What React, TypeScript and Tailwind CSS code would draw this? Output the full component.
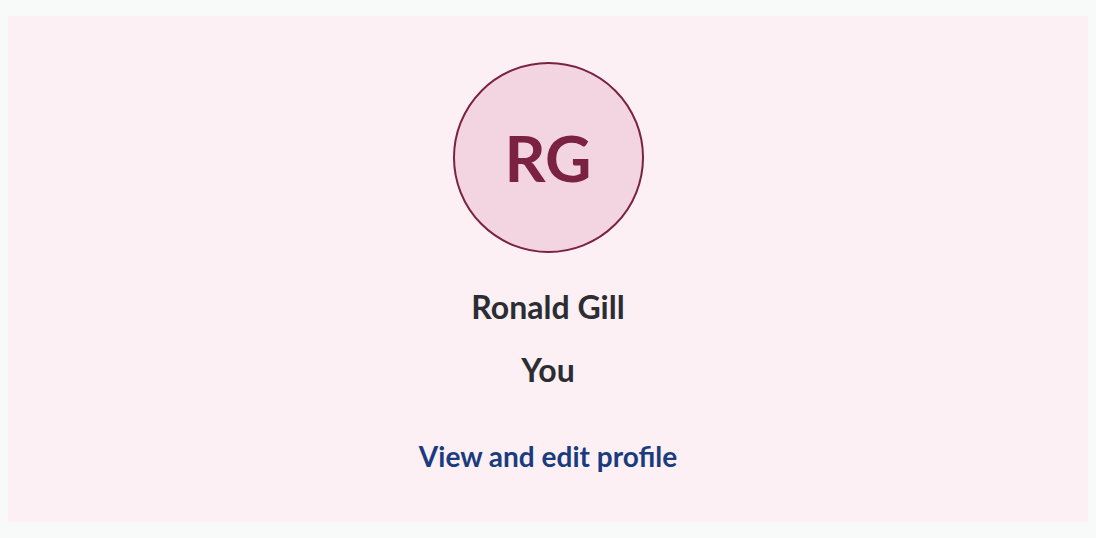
const App = () => {
  return (
    <div className="min-h-[538px] bg-[#f8f9f9] px-2 pt-4 pb-[17px] font-['Lato',sans-serif]">
      <section className="flex flex-col items-center bg-[#fcf0f4] pt-[46px] pb-[48px]">
        <div className="flex h-[191px] w-[191px] items-center justify-center rounded-full border-2 border-[#7b2142] bg-[#f3d5e1]">
          <span className="text-[64px] font-bold leading-none text-[#7b2142]">RG</span>
        </div>
        <h2 className="mt-[34px] text-[32px] font-bold leading-[40px] text-[#2b2d33]">Ronald Gill</h2>
        <p className="mt-[23px] text-[32px] font-bold leading-[40px] text-[#2b2d33]">You</p>
        <a href="#" className="mt-[48px] text-[28px] font-bold leading-[36px] text-[#1a3c7e]">
          View and edit profile
        </a>
      </section>
    </div>
  );
};

export default App;
